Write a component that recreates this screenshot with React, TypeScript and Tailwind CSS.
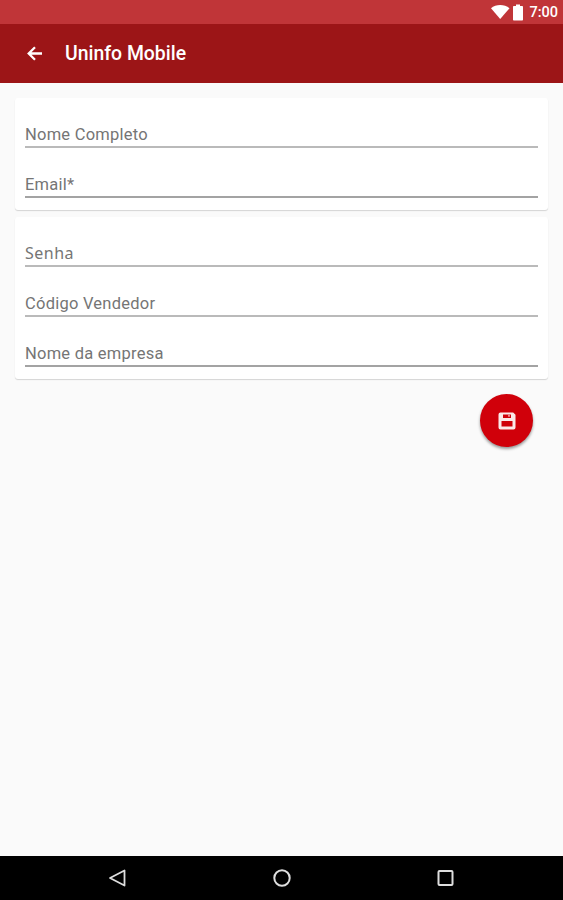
type FieldProps = { label: string; font?: string; dark?: boolean };

function Field({ label, font = "text-[16.5px] tracking-[0.24px]", dark }: FieldProps) {
  return (
    <label className={`flex h-[50px] flex-col justify-end border-b-2 ${dark ? "border-[#a3a3a3]" : "border-[#bababa]"}`}>
      <span className={`leading-[22px] text-[#757575] ${font}`}>{label}</span>
    </label>
  );
}

export default function App() {
  return (
    <div className="flex h-[900px] w-[563px] flex-col overflow-hidden bg-[#fafafa] font-['Roboto',sans-serif]">
      <div className="flex h-6 shrink-0 items-center justify-end bg-[#c03538] pr-[5px] text-white">
        <svg width="20" height="16" viewBox="0 0 20 16" fill="currentColor">
          <path d="M0 4.2C5-.1 13.300-.1 18.500 4.2L9.200 15Z" />
        </svg>
        <svg className="ml-px" width="12" height="17" viewBox="0 0 12 17" fill="currentColor">
          <path d="M4 .5h4V2h2.2q.8 0 .8.8v12.900q0 .8-.8.8H1.800q-.8 0-.8-.8V2.800q0-.8.8-.8H4Z" />
        </svg>
        <span className="ml-[5px] pt-[2px] text-[14.5px] font-medium leading-[22px]">7:00</span>
      </div>
      <header className="flex h-[59px] shrink-0 items-center bg-[#9c1517] text-white">
        <svg className="ml-[26px]" width="18" height="18" viewBox="0 0 18 18" fill="none" stroke="currentColor" strokeWidth="2.300">
          <path d="M16 8.500H2.700M9 2.200 2.700 8.500 9 14.800" />
        </svg>
        <h1 className="ml-[21px] text-[19.400px] font-medium leading-6">Uninfo Mobile</h1>
      </header>

      <main className="flex flex-1 flex-col px-[15px] pt-[15px]">
        <section className="h-[112px] rounded-[3px] bg-white px-[10px] shadow-[0_1px_1px_#d4d4d4]">
          <Field label="Nome Completo" />
          <Field label="Email*" dark />
        </section>
        <section className="mt-[7px] h-[162px] rounded-[3px] bg-white px-[10px] shadow-[0_1px_1px_#d4d4d4]">
          <Field label="Senha" font="pb-px font-['Noto_Sans',sans-serif] text-[16px] tracking-[0.5px]" />
          <Field label="Código Vendedor" />
          <Field label="Nome da empresa" dark />
        </section>
        <button aria-label="Salvar" className="mt-[15px] mr-[15px] flex size-[53px] items-center justify-center self-end rounded-full bg-[#d0000a] shadow-[0_2px_3px_rgba(0,0,0,0.4)]">
          <svg width="18" height="18" viewBox="0 0 18 18">
            <path fill="#fbe9e9" fillRule="evenodd" d="M2.500.5H15.200L17.500 2.800V15.500Q17.500 17.500 15.500 17.500H2.500Q.5 17.500.5 15.500V2.500Q.5.5 2.500.5ZM5 2.500v3.500h8V2.500ZM3.500 9v5.500h11V9Z" />
            <path fill="#e8898d" d="M10 2.500h2v2.300h-2Z" />
          </svg>
        </button>
      </main>

      <nav className="flex h-11 shrink-0 items-center bg-black text-[#dedede]">
        <svg className="ml-[108px]" width="20" height="20" viewBox="0 0 20 20" fill="none" stroke="currentColor" strokeWidth="1.800" strokeLinejoin="round">
          <path d="M2 10 16.500 2.500v15Z" />
        </svg>
        <svg className="ml-[144px]" width="20" height="20" viewBox="0 0 20 20" fill="none" stroke="currentColor" strokeWidth="2">
          <circle cx="10" cy="10" r="7.700" />
        </svg>
        <svg className="ml-[144px]" width="20" height="20" viewBox="0 0 20 20" fill="none" stroke="currentColor" strokeWidth="2">
          <rect x="2.500" y="3" width="14" height="14" rx="1" />
        </svg>
      </nav>
    </div>
  );
}
